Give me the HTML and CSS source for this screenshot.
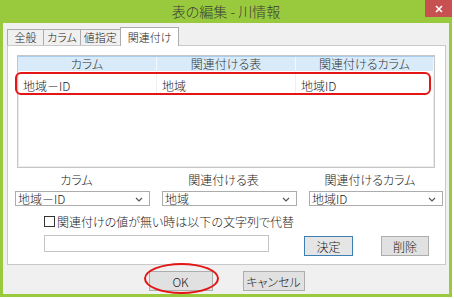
FILE: index.html
```html
<!DOCTYPE html>
<html lang="ja">
<head>
<meta charset="UTF-8">
<title>表の編集 - 川情報</title>
<link rel="stylesheet" href="styles.css">
</head>
<body>
<div class="window">
    <div class="titlebar">
        <span class="title">表の編集 - 川情報</span>
        <div class="close-btn">
            <svg width="8" height="8" viewBox="0 0 8 8"><path d="M1 1 L7 7 M7 1 L1 7" stroke="#fff" stroke-width="1.6"/></svg>
        </div>
    </div>
    <div class="client">
        <div class="tabs">
            <div class="tab">全般</div>
            <div class="tab">カラム</div>
            <div class="tab">値指定</div>
            <div class="tab active">関連付け</div>
        </div>
        <div class="panel">
            <div class="listview">
                <div class="lv-head">
                    <div>カラム</div>
                    <div>関連付ける表</div>
                    <div>関連付けるカラム</div>
                </div>
                <div class="lv-row marked">
                    <div>地域－ID</div>
                    <div>地域</div>
                    <div>地域ID</div>
                </div>
            </div>
            <div class="fields">
                <div class="field">
                    <div class="field-label">カラム</div>
                    <div class="combo">地域－ID<svg class="chev" width="8" height="5" viewBox="0 0 8 5"><path d="M1 1 L4 4 L7 1" fill="none" stroke="#555" stroke-width="1.2"/></svg></div>
                </div>
                <div class="field">
                    <div class="field-label">関連付ける表</div>
                    <div class="combo">地域<svg class="chev" width="8" height="5" viewBox="0 0 8 5"><path d="M1 1 L4 4 L7 1" fill="none" stroke="#555" stroke-width="1.2"/></svg></div>
                </div>
                <div class="field">
                    <div class="field-label">関連付けるカラム</div>
                    <div class="combo">地域ID<svg class="chev" width="8" height="5" viewBox="0 0 8 5"><path d="M1 1 L4 4 L7 1" fill="none" stroke="#555" stroke-width="1.2"/></svg></div>
                </div>
            </div>
            <div class="subst">
                <label class="check"><span class="box"></span>関連付けの値が無い時は以下の文字列で代替</label>
                <div class="subst-row">
                    <div class="textbox"></div>
                    <button class="btn default btn-set">決定</button>
                    <button class="btn btn-del">削除</button>
                </div>
            </div>
        </div>
        <div class="footer">
            <button class="btn btn-ok">OK</button>
            <button class="btn btn-cancel">キャンセル</button>
        </div>
    </div>
</div>
</body>
</html>
```
FILE: styles.css
```css
body {
    margin: 0;
    background: #ffffff;
    font-family: "Noto Sans CJK JP", "Noto Sans", sans-serif;
    font-size: 12px;
    font-weight: 300;
    font-feature-settings: "palt";
    color: #1a1a1a;
}
.window {
    position: relative;
    width: 452px;
    height: 297px;
    box-sizing: border-box;
    padding: 0 3px 3px 3px;
    background: #99c93c;
    display: flex;
    flex-direction: column;
}
.titlebar {
    height: 23px;
    line-height: 23px;
    text-align: center;
    flex: none;
}
.title {
    font-size: 14px;
    color: #3a3a3a;
}
.close-btn {
    position: absolute;
    top: 0;
    right: 0;
    width: 27px;
    height: 17px;
    background: #c75050;
    display: flex;
    align-items: center;
    justify-content: center;
}
.client {
    flex: 1;
    background: #f0f0f0;
    padding: 4px 3px 0 4px;
    display: flex;
    flex-direction: column;
}
.tabs {
    display: flex;
    align-items: flex-end;
    height: 18px;
    flex: none;
}
.tab {
    height: 16px;
    line-height: 15px;
    min-width: 37px;
    box-sizing: border-box;
    padding: 0 3px;
    text-align: center;
    font-size: 11px;
    border: 1px solid #acacac;
    border-bottom: none;
    margin-right: -1px;
    background: #f0f0f0;
}
.tab.active {
    height: 19px;
    line-height: 18px;
    margin-bottom: -1px;
    padding: 0 7px;
    background: #ffffff;
    position: relative;
    z-index: 1;
}
.panel {
    height: 220px;
    box-sizing: border-box;
    border: 1px solid #c9c9c9;
    background: #ffffff;
    flex: none;
}
.listview {
    margin: 9px 10px 0 9px;
    height: 113px;
    box-sizing: border-box;
    border: 1px solid #c6c6c6;
    box-shadow: inset 0 0 0 1px #ececec;
}
.lv-head {
    display: grid;
    grid-template-columns: 139px 139px 1fr;
    height: 14px;
    line-height: 14px;
    background: #d9ebf9;
    border-top: 1px solid #a9cdef;
    color: #333333;
}
.lv-head div {
    text-align: center;
    border-right: 1px solid #f2f8fe;
}
.lv-row {
    display: grid;
    grid-template-columns: 139px 139px 1fr;
    height: 24px;
    position: relative;
}
.lv-row div {
    padding: 6px 0 0 5px;
    line-height: 18px;
    border-right: 1px solid #f0f0f0;
}
.lv-row.marked::after {
    content: '';
    position: absolute;
    left: -3px;
    right: 3px;
    top: 1px;
    bottom: 0;
    border: 2px solid #e31515;
    border-radius: 6px;
}
.fields {
    display: grid;
    grid-template-columns: 135px 135px 134px;
    column-gap: 12px;
    padding-left: 7px;
    margin-top: 5px;
}
.field-label {
    height: 14px;
    line-height: 14px;
    text-align: center;
    padding-right: 12px;
    margin-bottom: 4px;
}
.combo {
    height: 15px;
    line-height: 13px;
    box-sizing: border-box;
    border: 1px solid #acacac;
    padding-left: 2px;
    position: relative;
    background: #ffffff;
}
.chev {
    position: absolute;
    right: 6px;
    top: 5px;
}
.subst {
    padding-left: 36px;
    margin-top: 9px;
}
.check {
    display: flex;
    align-items: center;
    height: 13px;
    line-height: 13px;
}
.box {
    width: 11px;
    height: 11px;
    box-sizing: border-box;
    border: 1px solid #333333;
    background: #ffffff;
    margin-right: 2px;
}
.subst-row {
    display: flex;
    align-items: flex-start;
    margin-top: 7px;
}
.textbox {
    width: 225px;
    height: 17px;
    box-sizing: border-box;
    border: 1px solid #c4c4c4;
}
.btn {
    font-family: inherit;
    font-size: 12px;
    font-weight: 300;
    font-feature-settings: "palt";
    color: #1a1a1a;
    height: 20px;
    box-sizing: border-box;
    padding: 0;
    border: 1px solid #adadad;
    background: #e1e1e1;
}
.btn.default {
    border-color: #3c7fb1;
    background: #e5e5e5;
}
.btn-set {
    width: 49px;
    margin: 1px 0 0 35px;
}
.btn-del {
    width: 48px;
    margin: 1px 0 0 28px;
}
.footer {
    display: flex;
    justify-content: center;
    gap: 30px;
    margin-top: 6px;
}
.btn-ok {
    width: 64px;
    position: relative;
}
.btn-ok::after {
    content: '';
    position: absolute;
    left: -6px;
    top: -9px;
    width: 75px;
    height: 31px;
    box-sizing: border-box;
    border: 2px solid #e31515;
    border-radius: 50%;
}
.btn-cancel {
    width: 62px;
}
```
